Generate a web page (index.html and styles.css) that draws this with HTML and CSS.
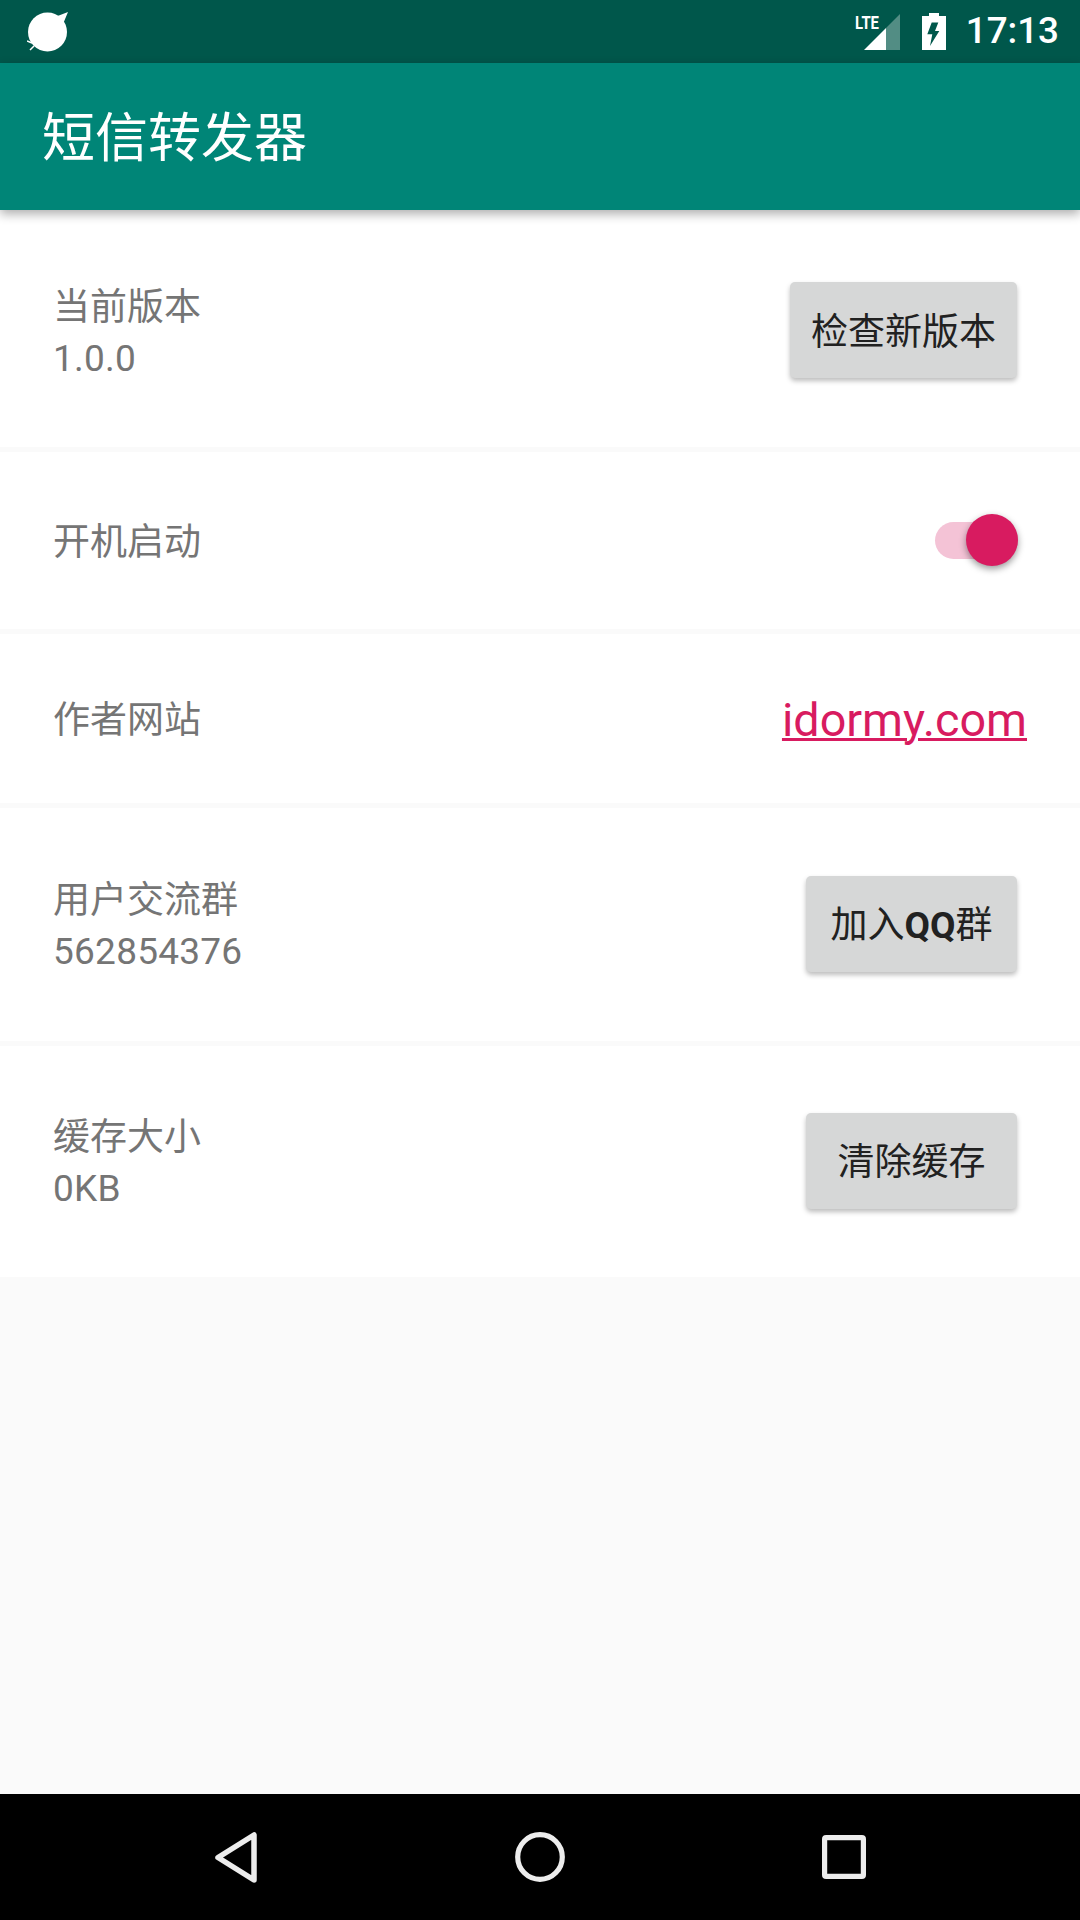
FILE: index.html
```html
<!DOCTYPE html>
<html lang="zh">
<head>
<meta charset="utf-8">
<title>短信转发器</title>
<link rel="stylesheet" href="styles.css">
</head>
<body>
<div class="phone">
  <div class="status">
    <svg class="status-logo" width="42" height="42" viewBox="0 0 42 42"><circle cx="20.5" cy="21" r="19.5" fill="#fff"/><path d="M28 6 L41 1 L36 13Z" fill="#fff"/><path d="M5 32 L0 30 M7 35 L3 39" stroke="#fff" stroke-width="1.5"/></svg>
    <div class="status-right">
      <svg class="status-signal" width="46" height="46" viewBox="0 -4 46 46"><text class="lte-text" x="0" y="15.5" textLength="24" lengthAdjust="spacingAndGlyphs">LTE</text><path d="M9 37 L31 15 V37Z" fill="#fff"/><path d="M31 15 L45 1 V37 H31Z" fill="#fff" fill-opacity=".32"/></svg>
      <svg class="status-battery" width="24" height="38" viewBox="0 0 24 38"><path fill-rule="evenodd" d="M7 0 H17 V3 H24 V37 H0 V3 H7Z M9.7 9.5 H16.3 L13 18 H17.3 L8 33 L10.3 21.3 H5.3Z" fill="#fff"/></svg>
      <span class="status-time">17:13</span>
    </div>
  </div>
  <header class="appbar">短信转发器</header>
  <main class="content">
    <section class="row row-version">
      <div class="info"><div>当前版本</div><div class="info-value">1.0.0</div></div>
      <button class="btn">检查新版本</button>
    </section>
    <section class="row row-boot">
      <div class="info"><div>开机启动</div></div>
      <div class="switch"><span class="switch-thumb"></span></div>
    </section>
    <section class="row row-site">
      <div class="info"><div>作者网站</div></div>
      <a class="link" href="#">idormy.com</a>
    </section>
    <section class="row row-group">
      <div class="info"><div>用户交流群</div><div class="info-value">562854376</div></div>
      <button class="btn btn-narrow">加入<b class="btn-bold">QQ</b>群</button>
    </section>
    <section class="row row-cache">
      <div class="info"><div>缓存大小</div><div class="info-value">0KB</div></div>
      <button class="btn btn-narrow">清除缓存</button>
    </section>
  </main>
  <nav class="navbar">
    <svg width="46" height="53" viewBox="0 0 46 53"><path d="M41 4 V49 L5 26.5Z" fill="none" stroke="#ededed" stroke-width="5.5" stroke-linejoin="round"/></svg>
    <svg width="50" height="50" viewBox="0 0 50 50"><circle cx="25" cy="25" r="22.3" fill="none" stroke="#ededed" stroke-width="5.2"/></svg>
    <svg width="44" height="44" viewBox="0 0 44 44"><rect x="2.6" y="2.6" width="38.8" height="38.8" rx="1.5" fill="none" stroke="#ededed" stroke-width="5.2"/></svg>
  </nav>
</div>
</body>
</html>
```
FILE: styles.css
```css
* { box-sizing: border-box; }
html, body { margin: 0; padding: 0; }
body { font-family: Roboto, "Noto Sans CJK SC", sans-serif; background: #fafafa; }
.phone { width: 1080px; height: 1920px; display: flex; flex-direction: column; overflow: hidden; }

.status { height: 63px; flex: none; background: #00574b; display: flex; align-items: center; justify-content: space-between; padding: 0 21px 0 27px; }
.status-logo { display: block; }
.status-right { display: flex; align-items: center; }
.status-signal { display: block; margin-right: 21px; }
.status-battery { display: block; margin-right: 20px; }
.lte-text { font: 700 19px Roboto, sans-serif; fill: #fff; }
.status-time { font-size: 36.75px; font-weight: 500; color: #fff; line-height: 1; }

.appbar { height: 147px; flex: none; background: #008577; color: #fff; font-size: 53px; line-height: 147px; padding: 3px 0 0 42px; box-shadow: 0 4px 10px rgba(0,0,0,.32); position: relative; z-index: 1; }

.content { flex: 1; display: flex; flex-direction: column; gap: 5px; }
.row { background: #fff; display: flex; align-items: center; justify-content: space-between; padding: 0 63px 0 53px; color: #757575; font-size: 37px; }
.row-version { height: 237px; }
.row-boot { height: 177px; }
.row-site { height: 169px; padding-right: 53px; }
.row-group { height: 233px; }
.row-cache { height: 231px; }
.info { line-height: 51px; margin-top: 3px; }
.row-version .info { margin-top: 8px; }
.info-value { letter-spacing: .25px; }

.btn { width: 227px; height: 96px; border: 0; padding: 0 0 4px; background: #d6d7d7; border-radius: 5px; color: #212121; font: inherit; box-shadow: 0 3px 5px rgba(0,0,0,.26); }
.row-version .btn { margin-top: 2px; padding-bottom: 2px; }
.row-group .btn, .row-cache .btn { margin-bottom: 2px; }
.btn-narrow { width: 211px; }
.btn-bold { font-weight: 700; }

.switch { width: 83px; height: 37px; margin-right: -1px; border-radius: 19px; background: #f4c3d6; position: relative; }
.switch-thumb { position: absolute; right: 0; top: -8px; width: 52px; height: 52px; border-radius: 50%; background: #d81b60; box-shadow: 0 3px 7px rgba(0,0,0,.4); }

.link { color: #d81b60; font-size: 46.7px; line-height: 1; margin-top: 4px; text-decoration: underline; text-decoration-thickness: 3px; }

.navbar { height: 126px; flex: none; background: #000; display: grid; grid-template-columns: repeat(3, 304px); justify-content: center; justify-items: center; align-items: center; }
.navbar svg { display: block; }
```
